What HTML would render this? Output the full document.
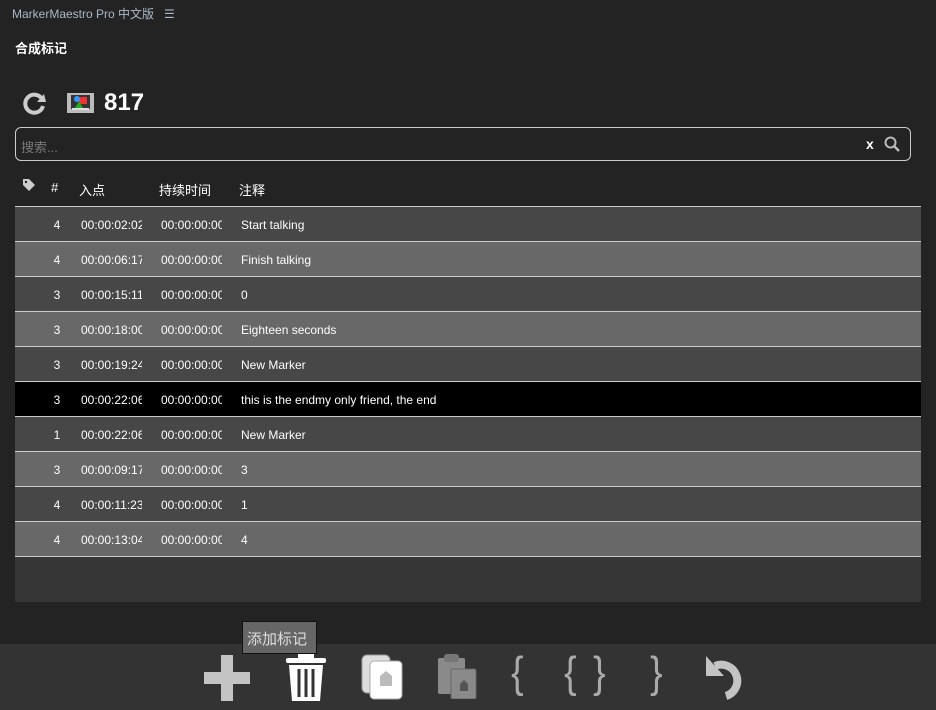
<!DOCTYPE html>
<html><head><meta charset="utf-8"><style>
*{margin:0;padding:0;box-sizing:border-box}
body{width:936px;height:710px;background:#232323;font-family:"Liberation Sans","Noto Sans CJK SC",sans-serif;color:#ddd;position:relative;overflow:hidden}
.abs{position:absolute}
.title{left:12px;top:5px;font-size:12px;color:#a9b8c8}
.h{left:15px;top:38px;font-size:13px;font-weight:bold;color:#fff}
.search{left:15px;top:127px;width:896px;height:34px;border:1px solid #ccc;border-radius:6px}
.search span{position:absolute;left:5px;top:9px;font-size:13px;color:#777}
.hdr{top:180px;font-size:13px;color:#fff}
.tbl{left:15px;top:206px;width:906px;height:396px;background:#363636;border-top:1px solid #ccc}
.row{height:35px;border-bottom:1px solid #ccc;position:relative;font-size:12px;color:#fff}
.row div{position:absolute;top:11px;overflow:hidden;white-space:nowrap}
.d{background:#474747}.l{background:#686868}.s{background:#000}
.c1{left:36px;width:12px;text-align:center}.c2{left:66px;width:61px}.c3{left:146px;width:61px}.c4{left:226px}
.bar{left:0;top:644px;width:936px;height:66px;background:#333}
.tip{left:242px;top:621px;width:75px;height:33px;background:#666;border:1px solid #111;color:#ddd;font-size:15px;padding:6px 0 0 4px}
.br{font-size:44px;color:#aaa;top:648px;font-family:"Liberation Sans",sans-serif;font-weight:normal;transform:scaleX(0.85)}
</style></head><body>
<div class="abs title">MarkerMaestro Pro 中文版 &nbsp; ☰</div>
<div class="abs h">合成标记</div>
<svg class="abs" style="left:23px;top:91px" width="24" height="24" viewBox="0 0 24 24"><path d="M19 8A9 9 0 1 0 20 15" fill="none" stroke="#ccc" stroke-width="4"/><path d="M14 11L23 11 21 3z" fill="#ccc"/></svg>
<svg class="abs" style="left:67px;top:93px" width="27" height="20" viewBox="0 0 27 20"><rect width="27" height="20" fill="#bbb"/><rect x="4" y="2" width="19" height="14" fill="#333"/><rect x="12" y="4" width="8" height="7" fill="#e33"/><circle cx="10" cy="6" r="3" fill="#39f"/><path d="M8 15L12 8 16 15z" fill="#2a2"/><rect x="5" y="15" width="17" height="2" fill="#ddd"/></svg>
<div class="abs" style="left:104px;top:89px;font-size:24px;font-weight:bold;color:#fff">817</div>
<div class="abs search"><span>搜索...</span><span style="left:850px;top:8px;color:#fff;font-size:14px;font-weight:bold">x</span>
<svg style="position:absolute;left:868px;top:8px" width="16" height="16" viewBox="0 0 16 16"><circle cx="6.5" cy="6.5" r="5" fill="none" stroke="#bbb" stroke-width="2"/><path d="M10 10L15 15" stroke="#bbb" stroke-width="2.5"/></svg></div>
<svg class="abs" style="left:23px;top:179px" width="12" height="12" viewBox="0 0 12 12"><path d="M0 0H6L12 6 6 12 0 6z" fill="#ccc"/><circle cx="3" cy="3" r="1.2" fill="#232323"/></svg>
<div class="abs hdr" style="left:51px">#</div>
<div class="abs hdr" style="left:79px">入点</div>
<div class="abs hdr" style="left:159px">持续时间</div>
<div class="abs hdr" style="left:239px">注释</div>
<div class="abs tbl">
<div class="row d"><div class="c1">4</div><div class="c2">00:00:02:02</div><div class="c3">00:00:00:00</div><div class="c4">Start talking</div></div>
<div class="row l"><div class="c1">4</div><div class="c2">00:00:06:17</div><div class="c3">00:00:00:00</div><div class="c4">Finish talking</div></div>
<div class="row d"><div class="c1">3</div><div class="c2">00:00:15:11</div><div class="c3">00:00:00:00</div><div class="c4">0</div></div>
<div class="row l"><div class="c1">3</div><div class="c2">00:00:18:00</div><div class="c3">00:00:00:00</div><div class="c4">Eighteen seconds</div></div>
<div class="row d"><div class="c1">3</div><div class="c2">00:00:19:24</div><div class="c3">00:00:00:00</div><div class="c4">New Marker</div></div>
<div class="row s"><div class="c1">3</div><div class="c2">00:00:22:06</div><div class="c3">00:00:00:00</div><div class="c4">this is the endmy only friend, the end</div></div>
<div class="row d"><div class="c1">1</div><div class="c2">00:00:22:06</div><div class="c3">00:00:00:00</div><div class="c4">New Marker</div></div>
<div class="row l"><div class="c1">3</div><div class="c2">00:00:09:17</div><div class="c3">00:00:00:00</div><div class="c4">3</div></div>
<div class="row d"><div class="c1">4</div><div class="c2">00:00:11:23</div><div class="c3">00:00:00:00</div><div class="c4">1</div></div>
<div class="row l"><div class="c1">4</div><div class="c2">00:00:13:04</div><div class="c3">00:00:00:00</div><div class="c4">4</div></div>
</div>
<div class="abs bar"></div>
<svg class="abs" style="left:204px;top:655px" width="46" height="46" viewBox="0 0 46 46"><path d="M17 0H29V17H46V29H29V46H17V29H0V17H17z" fill="#c4c4c4"/></svg>
<svg class="abs" style="left:286px;top:653px" width="40" height="48" viewBox="0 0 40 48"><rect x="0" y="5" width="40" height="5" rx="2" fill="#fff"/><rect x="12" y="0" width="16" height="6" fill="#fff"/><path d="M3 12H37L34 48H6z" fill="#fff"/><path d="M13 16V44M20 16V44M27 16V44" stroke="#333" stroke-width="3"/></svg>
<svg class="abs" style="left:361px;top:654px" width="42" height="46" viewBox="0 0 42 46"><rect x="1" y="1" width="28" height="38" rx="5" fill="#ddd" stroke="#999" stroke-width="1"/><rect x="9" y="7" width="32" height="38" rx="4" fill="#fff" stroke="#aaa"/><path d="M19 22L25 17 31 22V32H19z" fill="#bbb"/></svg>
<svg class="abs" style="left:437px;top:653px" width="40" height="46" viewBox="0 0 40 46"><rect x="1" y="5" width="27" height="36" rx="2" fill="#8a8a8a"/><rect x="7" y="1" width="15" height="8" rx="3" fill="#777"/><rect x="14" y="16" width="25" height="30" rx="2" fill="#8a8a8a" stroke="#666"/><path d="M23 31L27 27 31 31V38H23z" fill="#555"/></svg>
<div class="abs br" style="left:510px">{</div>
<div class="abs br" style="left:563px">{</div>
<div class="abs br" style="left:592px">}</div>
<div class="abs br" style="left:649px">}</div>
<svg class="abs" style="left:706px;top:654px" width="44" height="46" viewBox="0 0 44 46"><path d="M9 12A16 16 0 1 1 20 42" fill="none" stroke="#c4c4c4" stroke-width="8"/><path d="M0 2V22H18z" fill="#c4c4c4"/></svg>
<div class="abs tip">添加标记</div>
</body></html>
